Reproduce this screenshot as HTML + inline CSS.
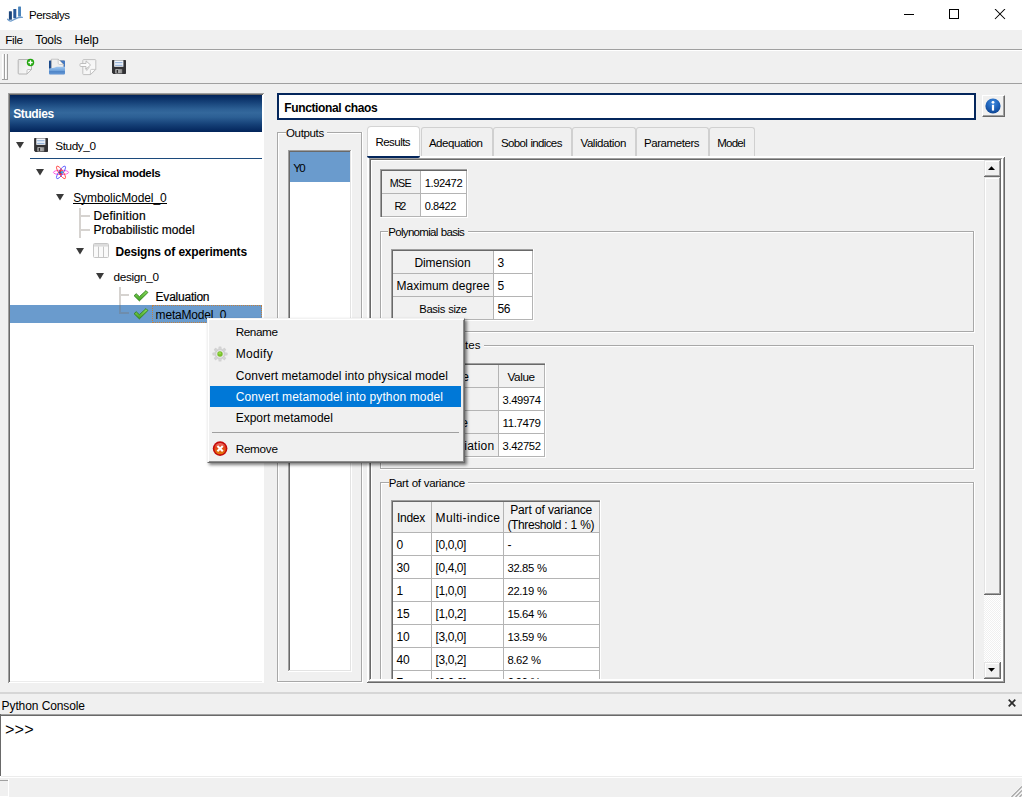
<!DOCTYPE html>
<html>
<head>
<meta charset="utf-8">
<title>Persalys</title>
<style>
*{box-sizing:border-box;margin:0;padding:0}
html,body{width:1022px;height:797px;overflow:hidden;background:#f0f0f0;font-family:"Liberation Sans",sans-serif;font-size:12px;color:#000}
.a{position:absolute}
.t{position:absolute;white-space:nowrap;line-height:14px;height:14px}
</style>
</head>
<body>
<!-- title bar -->
<div class="a" style="left:0px;top:0px;width:1022px;height:30px;background:#ffffff;"></div>
<svg class="a" style="left:6px;top:5px" width="18" height="18" viewBox="0 0 18 18">
<path d="M1.6 14.3 Q3.5 16.4 5.2 16 L10 13.6 Q13 12 16.4 12.3" stroke="#6f9ccc" stroke-width="1.3" fill="none" stroke-linecap="round"/>
<rect x="2.9" y="6.2" width="3" height="8.6" rx="0.5" fill="#1c467c"/>
<rect x="7.3" y="4" width="3" height="9.3" rx="0.5" fill="#28599a"/>
<rect x="12.1" y="1.5" width="2.9" height="10" rx="0.5" fill="#4a84bc"/>
</svg>
<div class="t" style="left:29.00px;top:8px;letter-spacing:-0.440px;font-size:11.5px;line-height:14px;height:14px;">Persalys</div>
<svg class="a" style="left:904px;top:9px" width="12" height="12"><path d="M0 5.5h10" stroke="#000" stroke-width="1"/></svg>
<svg class="a" style="left:949px;top:9px" width="12" height="12"><rect x="0.5" y="0.5" width="9" height="9" fill="none" stroke="#000" stroke-width="1"/></svg>
<svg class="a" style="left:994px;top:9px" width="12" height="12"><path d="M1 0l10 10M11 0l-10 10" stroke="#000" stroke-width="1.05"/></svg>
<!-- menu bar -->
<div class="t" style="left:5.20px;top:33px;letter-spacing:-0.366px;font-size:11.75px;line-height:14px;height:14px;">File</div>
<div class="t" style="left:35.30px;top:33px;letter-spacing:-0.325px;">Tools</div>
<div class="t" style="left:74.60px;top:33px;letter-spacing:-0.233px;">Help</div>
<div class="a" style="left:0px;top:49px;width:1022px;height:1px;background:#a0a0a0;"></div>
<div class="a" style="left:0px;top:50px;width:1022px;height:1px;background:#ffffff;"></div>
<!-- toolbar -->
<div class="a" style="left:2px;top:54px;width:1px;height:25px;background:#ffffff;"></div>
<div class="a" style="left:4px;top:54px;width:1px;height:26px;background:#a0a0a0;"></div>
<div class="a" style="left:2px;top:79px;width:3px;height:1px;background:#a0a0a0;"></div>
<div class="a" style="left:5px;top:54px;width:1px;height:25px;background:#ffffff;"></div>
<div class="a" style="left:7px;top:54px;width:1px;height:26px;background:#a0a0a0;"></div>
<div class="a" style="left:5px;top:79px;width:3px;height:1px;background:#a0a0a0;"></div>
<div class="a" style="left:0px;top:83px;width:1022px;height:1px;background:#a0a0a0;"></div>
<svg class="a" style="left:17px;top:58px" width="18" height="18" viewBox="0 0 18 18">
<defs><linearGradient id="pg" x1="0" y1="0" x2="1" y2="1"><stop offset="0" stop-color="#e4e4e4"/><stop offset="1" stop-color="#fdfdfd"/></linearGradient></defs>
<path d="M2 1.5h9.5l3 0v10l-4.5 4.5h-8a0.8 0.8 0 0 1-0.8-0.8v-12.9a0.8 0.8 0 0 1 0.8-0.8z" fill="url(#pg)" stroke="#b4b4b4" stroke-width="1"/>
<path d="M10 16v-3.5a1 1 0 0 1 1-1h3.5z" fill="#f8f8f8" stroke="#b4b4b4" stroke-width="0.8"/>
<circle cx="13.5" cy="4.5" r="3.7" fill="#22a50f"/>
<path d="M13.5 2.3v4.4M11.3 4.5h4.4" stroke="#fff" stroke-width="1.3"/>
</svg>
<svg class="a" style="left:48px;top:58px" width="18" height="18" viewBox="0 0 18 18">
<defs><linearGradient id="og" x1="0" y1="0" x2="0" y2="1"><stop offset="0" stop-color="#a2c8f0"/><stop offset="0.45" stop-color="#74a6de"/><stop offset="1" stop-color="#5a8ecf"/></linearGradient></defs>
<path d="M1 3.2a0.8 0.8 0 0 1 0.8-0.8h14.4a0.8 0.8 0 0 1 0.8 0.8v11h-16z" fill="#1a4889"/>
<path d="M11 3h6v7.5h-6z" fill="#4378c2"/>
<path d="M3.4 1.2h6.8l5.2 5.2v4.6h-12z" fill="#eeeeee" stroke="#b4b4b4" stroke-width="0.7"/>
<path d="M10.2 1.2l5.2 5.2h-4a1.2 1.2 0 0 1-1.2-1.2z" fill="#fbfbfb" stroke="#b4b4b4" stroke-width="0.6"/>
<path d="M1 10.4l5-0.7l2.8-1h8.2v6.7a1 1 0 0 1-1 1h-14a1 1 0 0 1-1-1z" fill="url(#og)"/>
<path d="M1.2 13.9h15.6" stroke="#3c74bc" stroke-width="0.9"/>
</svg>
<svg class="a" style="left:79px;top:58px" width="18" height="18" viewBox="0 0 18 18">
<defs><linearGradient id="ip" x1="0" y1="0" x2="1" y2="1"><stop offset="0" stop-color="#f0f0f0"/><stop offset="1" stop-color="#fcfcfc"/></linearGradient></defs>
<path d="M4.6 1.6h11.4a0.8 0.8 0 0 1 0.8 0.8v9l-5.2 5.2h-7a0.8 0.8 0 0 1-0.8-0.8v-13.4a0.8 0.8 0 0 1 0.8-0.8z" fill="url(#ip)" stroke="#c2c2c2" stroke-width="1"/>
<path d="M11.4 16.6v-4a1.2 1.2 0 0 1 1.2-1.2h4z" fill="#fdfdfd" stroke="#bdbdbd" stroke-width="0.8"/>
<path d="M6.2 10.2l1.6 2.2l2.6-3.4" fill="none" stroke="#cfcfcf" stroke-width="1.1"/>
<path d="M1.8 5.5h5.2v-2.6l4.6 4.1l-4.6 4.1v-2.6h-5.2a0.8 0.8 0 0 1-0.8-0.8v-1.4a0.8 0.8 0 0 1 0.8-0.8z" fill="#fbfbfb" stroke="#b9b9b9" stroke-width="0.9"/>
</svg>
<svg class="a" style="left:111px;top:59px" width="16" height="16" viewBox="0 0 16 16">
<defs><linearGradient id="fg1" x1="0" y1="0" x2="1" y2="0"><stop offset="0" stop-color="#d6d6d6"/><stop offset="1" stop-color="#8c8c8c"/></linearGradient></defs>
<path d="M1 1.6a0.7 0.7 0 0 1 0.7-0.7h12.6a0.7 0.7 0 0 1 0.7 0.7v12.7a0.7 0.7 0 0 1-0.7 0.7h-12l-1.3-1.2z" fill="#323235"/>
<path d="M3.2 1.3h9.2v6.5h-9.2z" fill="#f3f6fb"/>
<path d="M4.1 3.7h7.4M4.1 6.3h7.4" stroke="#86a8d4" stroke-width="1"/>
<path d="M4.4 10.2h6.8v4.2h-6.8z" fill="url(#fg1)"/>
<path d="M5.5 10.9h1.6v3h-1.6z" fill="#2c2c2e"/>
</svg>
<!-- studies -->
<div class="a" style="left:8px;top:93px;width:256px;height:590px;background:#ffffff;"></div>
<div class="a" style="left:8px;top:93px;width:256px;height:1px;background:#a0a0a0;"></div>
<div class="a" style="left:8px;top:93px;width:1px;height:590px;background:#a0a0a0;"></div>
<div class="a" style="left:9px;top:94px;width:254px;height:1px;background:#696969;"></div>
<div class="a" style="left:9px;top:94px;width:1px;height:588px;background:#696969;"></div>
<div class="a" style="left:10px;top:681px;width:252px;height:1px;background:#ececec;"></div>
<div class="a" style="left:10px;top:95px;width:252px;height:37px;background:linear-gradient(to bottom,#02245a 0%,#143f76 18%,#2c5f94 38%,#34689c 48%,#2c5f94 60%,#143f76 80%,#02245a 100%);"></div>
<div class="t" style="left:13.20px;top:107px;letter-spacing:-0.383px;font-weight:bold;color:#fff;">Studies</div>
<svg class="a" style="left:16px;top:142px" width="8" height="7" viewBox="0 0 8 7"><path d="M0 0H8L4.0 6.5Z" fill="#3a3a3a"/></svg>
<svg class="a" style="left:34px;top:138px" width="14" height="14" viewBox="0.9 0.9 14.1 14.1">
<defs><linearGradient id="fg2" x1="0" y1="0" x2="1" y2="0"><stop offset="0" stop-color="#d6d6d6"/><stop offset="1" stop-color="#8c8c8c"/></linearGradient></defs>
<path d="M1 1.6a0.7 0.7 0 0 1 0.7-0.7h12.6a0.7 0.7 0 0 1 0.7 0.7v12.7a0.7 0.7 0 0 1-0.7 0.7h-12l-1.3-1.2z" fill="#323235"/>
<path d="M3.2 1.3h9.2v6.5h-9.2z" fill="#f3f6fb"/>
<path d="M4.1 3.7h7.4M4.1 6.3h7.4" stroke="#86a8d4" stroke-width="1"/>
<path d="M4.4 10.2h6.8v4.2h-6.8z" fill="url(#fg2)"/>
<path d="M5.5 10.9h1.6v3h-1.6z" fill="#2c2c2e"/>
</svg>
<div class="t" style="left:55.30px;top:139px;letter-spacing:-0.414px;font-size:11.75px;line-height:14px;height:14px;">Study_0</div>
<div class="a" style="left:30px;top:158px;width:232px;height:1px;background:#1c4a7c;"></div>
<svg class="a" style="left:36px;top:169px" width="8" height="7" viewBox="0 0 8 7"><path d="M0 0H8L4.0 6.5Z" fill="#3a3a3a"/></svg>
<svg class="a" style="left:52px;top:164px" width="18" height="17" viewBox="0 0 18 17">
<g fill="none" stroke-width="0.9">
<ellipse cx="9" cy="8.4" rx="7.6" ry="2.2" stroke="#ff48e0"/>
<ellipse cx="9" cy="8.4" rx="7.4" ry="2.2" stroke="#5a5aff" transform="rotate(-56 9 8.4)"/>
<ellipse cx="9" cy="8.4" rx="7.4" ry="2.2" stroke="#ff4848" transform="rotate(56 9 8.4)"/>
</g>
<circle cx="8.6" cy="7.4" r="1.3" fill="#f03818"/><circle cx="8.8" cy="9.6" r="1.3" fill="#e83030"/>
<circle cx="10" cy="8.2" r="1.2" fill="#3aa0e8"/><circle cx="7.8" cy="8.6" r="1.1" fill="#2848c8"/>
</svg>
<div class="t" style="left:75.20px;top:166px;letter-spacing:-0.360px;word-spacing:0.360px;font-weight:bold;font-size:11.5px;line-height:14px;height:14px;">Physical models</div>
<svg class="a" style="left:56px;top:194px" width="8" height="7" viewBox="0 0 8 7"><path d="M0 0H8L4.0 6.5Z" fill="#3a3a3a"/></svg>
<div class="t" style="left:73.20px;top:191px;letter-spacing:-0.086px;">SymbolicModel_0</div>
<div class="a" style="left:73px;top:203px;width:94px;height:1px;background:#000;"></div>
<div class="a" style="left:79px;top:208px;width:2px;height:30px;background:rgba(120,110,100,0.3);"></div>
<div class="a" style="left:81px;top:215px;width:9px;height:2px;background:rgba(120,110,100,0.3);"></div>
<div class="a" style="left:81px;top:229px;width:9px;height:2px;background:rgba(120,110,100,0.3);"></div>
<div class="t" style="left:93.60px;top:209px;letter-spacing:0.222px;-webkit-text-stroke:0.2px #000;">Definition</div>
<div class="t" style="left:93.60px;top:223px;letter-spacing:0.017px;-webkit-text-stroke:0.2px #000;">Probabilistic model</div>
<svg class="a" style="left:76px;top:248px" width="8" height="7" viewBox="0 0 8 7"><path d="M0 0H8L4.0 6.5Z" fill="#3a3a3a"/></svg>
<svg class="a" style="left:93px;top:243px" width="16" height="15" viewBox="0 0 16 15">
<rect x="0.5" y="0.5" width="15" height="14" rx="1" fill="#fafafa" stroke="#c6c6c6"/>
<rect x="1" y="1" width="14" height="2.6" fill="#dcdcdc"/>
<path d="M5.5 3.6v10.9M10.5 3.6v10.9" stroke="#c6c6c6"/>
</svg>
<div class="t" style="left:115.50px;top:245px;letter-spacing:-0.200px;word-spacing:0.200px;font-weight:bold;">Designs of experiments</div>
<svg class="a" style="left:96px;top:273px" width="8" height="7" viewBox="0 0 8 7"><path d="M0 0H8L4.0 6.5Z" fill="#3a3a3a"/></svg>
<div class="t" style="left:113.50px;top:270px;letter-spacing:-0.312px;font-size:11.75px;line-height:14px;height:14px;">design_0</div>
<div class="a" style="left:10px;top:305px;width:252px;height:18px;background:#6a9bcd;"></div>
<div class="a" style="left:119px;top:287px;width:2px;height:27px;background:rgba(120,110,100,0.3);"></div>
<div class="a" style="left:121px;top:294px;width:8px;height:2px;background:rgba(120,110,100,0.3);"></div>
<div class="a" style="left:121px;top:312px;width:8px;height:2px;background:rgba(120,110,100,0.3);"></div>
<div class="a" style="left:152px;top:305px;width:110px;height:18px;border:1px dotted #c08040;"></div>
<svg class="a" style="left:133px;top:290px" width="16" height="12" viewBox="0 0 16 12">
<defs><linearGradient id="ck1" x1="0" y1="0" x2="0" y2="1"><stop offset="0" stop-color="#8ade5c"/><stop offset="1" stop-color="#3f9f22"/></linearGradient></defs>
<path d="M1.1 5.7L3.2 3.7L6.4 6.7L13 0.6L14.9 2.5L6.4 10.9Z" fill="url(#ck1)" stroke="#2f7f1c" stroke-width="0.9" stroke-linejoin="round"/>
</svg>
<svg class="a" style="left:133px;top:308px" width="16" height="12" viewBox="0 0 16 12">
<defs><linearGradient id="ck2" x1="0" y1="0" x2="0" y2="1"><stop offset="0" stop-color="#8ade5c"/><stop offset="1" stop-color="#3f9f22"/></linearGradient></defs>
<path d="M1.1 5.7L3.2 3.7L6.4 6.7L13 0.6L14.9 2.5L6.4 10.9Z" fill="url(#ck2)" stroke="#2f7f1c" stroke-width="0.9" stroke-linejoin="round"/>
</svg>
<div class="t" style="left:155.60px;top:290px;letter-spacing:-0.233px;-webkit-text-stroke:0.2px #000;">Evaluation</div>
<div class="t" style="left:155.60px;top:308px;letter-spacing:-0.180px;">metaModel_0</div>
<!-- right -->
<div class="a" style="left:277px;top:93px;width:699px;height:27px;background:#ffffff;border:2px solid #04265c;"></div>
<div class="t" style="left:284.30px;top:101px;letter-spacing:-0.379px;word-spacing:0.379px;font-weight:bold;">Functional chaos</div>
<div class="a" style="left:982px;top:95px;width:23px;height:22px;background:#f0f0f0;border-top:1px solid #fff;border-left:1px solid #fff;border-right:1px solid #696969;border-bottom:1px solid #696969;"></div>
<div class="a" style="left:1003px;top:96px;width:1px;height:20px;background:#a0a0a0;"></div>
<div class="a" style="left:983px;top:115px;width:21px;height:1px;background:#a0a0a0;"></div>
<svg class="a" style="left:985px;top:98px" width="16" height="16" viewBox="0 0 16 16">
<defs><radialGradient id="ig" cx="0.5" cy="0.3" r="0.75"><stop offset="0" stop-color="#3f8be0"/><stop offset="0.6" stop-color="#1b5db3"/><stop offset="1" stop-color="#0c3f8a"/></radialGradient></defs>
<circle cx="8" cy="8" r="7.6" fill="url(#ig)"/>
<circle cx="8" cy="4.3" r="1.4" fill="#fff"/>
<path d="M6.9 6.8h2.2v5.8h-2.2z" fill="#fff"/>
</svg>
<div class="a" style="left:277px;top:132px;width:9px;height:1px;background:#a8a8a8;"></div>
<div class="a" style="left:327.2px;top:132px;width:34.80000000000001px;height:1px;background:#a8a8a8;"></div>
<div class="a" style="left:278px;top:133px;width:8px;height:1px;background:#ffffff;"></div>
<div class="a" style="left:327.2px;top:133px;width:33.80000000000001px;height:1px;background:#ffffff;"></div>
<div class="a" style="left:277px;top:132px;width:1px;height:550px;background:#a8a8a8;"></div>
<div class="a" style="left:278px;top:133px;width:1px;height:548px;background:#ffffff;"></div>
<div class="a" style="left:361px;top:132px;width:1px;height:550px;background:#a8a8a8;"></div>
<div class="a" style="left:362px;top:132px;width:1px;height:551px;background:#ffffff;"></div>
<div class="a" style="left:277px;top:681px;width:85px;height:1px;background:#a8a8a8;"></div>
<div class="a" style="left:277px;top:682px;width:86px;height:1px;background:#ffffff;"></div>
<div class="t" style="left:286.00px;top:126px;letter-spacing:-0.342px;font-size:11.5px;line-height:14px;height:14px;">Outputs</div>
<div class="a" style="left:288px;top:150px;width:64px;height:522px;background:#ffffff;"></div>
<div class="a" style="left:288px;top:150px;width:64px;height:1px;background:#a0a0a0;"></div>
<div class="a" style="left:288px;top:150px;width:1px;height:522px;background:#a0a0a0;"></div>
<div class="a" style="left:289px;top:151px;width:62px;height:1px;background:#696969;"></div>
<div class="a" style="left:289px;top:151px;width:1px;height:520px;background:#696969;"></div>
<div class="a" style="left:289px;top:670px;width:62px;height:1px;background:#e3e3e3;"></div>
<div class="a" style="left:350px;top:151px;width:1px;height:520px;background:#e3e3e3;"></div>
<div class="a" style="left:288px;top:671px;width:64px;height:1px;background:#ffffff;"></div>
<div class="a" style="left:351px;top:150px;width:1px;height:522px;background:#ffffff;"></div>
<div class="a" style="left:290px;top:152px;width:60px;height:30px;background:#6a9bcd;"></div>
<div class="t" style="left:293.30px;top:161px;letter-spacing:-1.787px;font-size:11.5px;line-height:14px;height:14px;">Y0</div>
<div class="a" style="left:421px;top:127px;width:72px;height:30px;background:#f0f0f0;border:1px solid #d0d0d0;border-bottom:none;border-radius:3px 3px 0 0;"></div>
<div class="t" style="left:428.90px;top:136px;letter-spacing:-0.452px;font-size:11.5px;line-height:14px;height:14px;">Adequation</div>
<div class="a" style="left:493px;top:127px;width:79px;height:30px;background:#f0f0f0;border:1px solid #d0d0d0;border-bottom:none;border-radius:3px 3px 0 0;"></div>
<div class="t" style="left:501.00px;top:136px;letter-spacing:-0.639px;word-spacing:0.639px;font-size:11.5px;line-height:14px;height:14px;">Sobol indices</div>
<div class="a" style="left:572px;top:127px;width:64px;height:30px;background:#f0f0f0;border:1px solid #d0d0d0;border-bottom:none;border-radius:3px 3px 0 0;"></div>
<div class="t" style="left:580.50px;top:136px;letter-spacing:-0.427px;font-size:11.5px;line-height:14px;height:14px;">Validation</div>
<div class="a" style="left:636px;top:127px;width:73px;height:30px;background:#f0f0f0;border:1px solid #d0d0d0;border-bottom:none;border-radius:3px 3px 0 0;"></div>
<div class="t" style="left:644.00px;top:136px;letter-spacing:-0.435px;font-size:11.5px;line-height:14px;height:14px;">Parameters</div>
<div class="a" style="left:709px;top:127px;width:46px;height:30px;background:#f0f0f0;border:1px solid #d0d0d0;border-bottom:none;border-radius:3px 3px 0 0;"></div>
<div class="t" style="left:717.20px;top:136px;letter-spacing:-0.734px;font-size:11.5px;line-height:14px;height:14px;">Model</div>
<div class="a" style="left:367px;top:156px;width:638px;height:1px;background:#ffffff;"></div>
<div class="a" style="left:367px;top:157px;width:637px;height:1px;background:#ffffff;"></div>
<div class="a" style="left:367px;top:156px;width:1px;height:527px;background:#ffffff;"></div>
<div class="a" style="left:368px;top:156px;width:1px;height:526px;background:#ffffff;"></div>
<div class="a" style="left:367px;top:682px;width:638px;height:1px;background:#696969;"></div>
<div class="a" style="left:368px;top:681px;width:636px;height:1px;background:#a0a0a0;"></div>
<div class="a" style="left:1004px;top:157px;width:1px;height:526px;background:#696969;"></div>
<div class="a" style="left:1003px;top:158px;width:1px;height:524px;background:#a0a0a0;"></div>
<div class="a" style="left:369px;top:158px;width:633px;height:1px;background:#a0a0a0;"></div>
<div class="a" style="left:370px;top:159px;width:631px;height:1px;background:#696969;"></div>
<div class="a" style="left:369px;top:158px;width:1px;height:522px;background:#a0a0a0;"></div>
<div class="a" style="left:370px;top:159px;width:1px;height:520px;background:#696969;"></div>
<div class="a" style="left:371px;top:160px;width:613px;height:1px;background:#ffffff;"></div>
<div class="a" style="left:371px;top:160px;width:1px;height:519px;background:#ffffff;"></div>
<div class="a" style="left:370px;top:680px;width:633px;height:1px;background:#ffffff;"></div>
<div class="a" style="left:371px;top:679px;width:631px;height:1px;background:#ffffff;"></div>
<div class="a" style="left:1002px;top:159px;width:1px;height:522px;background:#ffffff;"></div>
<div class="a" style="left:1001px;top:160px;width:1px;height:520px;background:#ffffff;"></div>
<div class="a" style="left:367px;top:126px;width:53px;height:30px;background:#ffffff;border:1px solid #d4d4d4;border-bottom:none;border-radius:4px 4px 0 0;"></div>
<div class="a" style="left:367px;top:156px;width:53px;height:2px;background:#04265c;border-radius:0 0 2px 2px;"></div>
<div class="t" style="left:375.50px;top:135px;letter-spacing:-0.539px;font-size:11.5px;line-height:14px;height:14px;">Results</div>
<div class="a" style="left:0;top:0;width:984px;height:679px;overflow:hidden">
<div class="a" style="left:382px;top:171px;width:85px;height:46px;background:#ffffff;"></div>
<div class="a" style="left:382px;top:171px;width:38px;height:22px;background:#f1f1f1;"></div>
<div class="a" style="left:382px;top:194px;width:38px;height:22px;background:#f1f1f1;"></div>
<div class="a" style="left:382px;top:193px;width:85px;height:1px;background:#b4b4b4;"></div>
<div class="a" style="left:382px;top:216px;width:85px;height:1px;background:#b4b4b4;"></div>
<div class="a" style="left:420px;top:171px;width:1px;height:46px;background:#b4b4b4;"></div>
<div class="a" style="left:466px;top:171px;width:1px;height:46px;background:#b4b4b4;"></div>
<div class="a" style="left:380px;top:169px;width:88px;height:1px;background:#a0a0a0;"></div>
<div class="a" style="left:380px;top:169px;width:1px;height:49px;background:#a0a0a0;"></div>
<div class="a" style="left:381px;top:170px;width:86px;height:1px;background:#696969;"></div>
<div class="a" style="left:381px;top:170px;width:1px;height:48px;background:#696969;"></div>
<div class="a" style="left:380px;top:217px;width:88px;height:1px;background:#ffffff;"></div>
<div class="a" style="left:467px;top:169px;width:1px;height:49px;background:#ffffff;"></div>
<div class="t" style="left:389.80px;top:176px;letter-spacing:-0.696px;font-size:10.75px;line-height:14px;height:14px;">MSE</div>
<div class="t" style="left:424.70px;top:176px;letter-spacing:-0.448px;font-size:11.25px;line-height:14px;height:14px;">1.92472</div>
<div class="t" style="left:394.50px;top:199px;letter-spacing:-1.906px;font-size:10.75px;line-height:14px;height:14px;">R2</div>
<div class="t" style="left:424.70px;top:199px;letter-spacing:-0.388px;font-size:11.0px;line-height:14px;height:14px;">0.8422</div>
<div class="a" style="left:380px;top:231px;width:8px;height:1px;background:#a8a8a8;"></div>
<div class="a" style="left:467.8px;top:231px;width:506.2px;height:1px;background:#a8a8a8;"></div>
<div class="a" style="left:381px;top:232px;width:7px;height:1px;background:#ffffff;"></div>
<div class="a" style="left:467.8px;top:232px;width:505.2px;height:1px;background:#ffffff;"></div>
<div class="a" style="left:380px;top:231px;width:1px;height:101px;background:#a8a8a8;"></div>
<div class="a" style="left:381px;top:232px;width:1px;height:99px;background:#ffffff;"></div>
<div class="a" style="left:973px;top:231px;width:1px;height:101px;background:#a8a8a8;"></div>
<div class="a" style="left:974px;top:231px;width:1px;height:102px;background:#ffffff;"></div>
<div class="a" style="left:380px;top:331px;width:594px;height:1px;background:#a8a8a8;"></div>
<div class="a" style="left:380px;top:332px;width:595px;height:1px;background:#ffffff;"></div>
<div class="t" style="left:388.30px;top:225px;letter-spacing:-0.696px;word-spacing:0.696px;font-size:11.5px;line-height:14px;height:14px;">Polynomial basis</div>
<div class="a" style="left:393px;top:251px;width:140px;height:69px;background:#ffffff;"></div>
<div class="a" style="left:393px;top:251px;width:100px;height:22px;background:#f1f1f1;"></div>
<div class="a" style="left:393px;top:274px;width:100px;height:22px;background:#f1f1f1;"></div>
<div class="a" style="left:393px;top:297px;width:100px;height:22px;background:#f1f1f1;"></div>
<div class="a" style="left:393px;top:273px;width:140px;height:1px;background:#b4b4b4;"></div>
<div class="a" style="left:393px;top:296px;width:140px;height:1px;background:#b4b4b4;"></div>
<div class="a" style="left:393px;top:319px;width:140px;height:1px;background:#b4b4b4;"></div>
<div class="a" style="left:493px;top:251px;width:1px;height:69px;background:#b4b4b4;"></div>
<div class="a" style="left:532px;top:251px;width:1px;height:69px;background:#b4b4b4;"></div>
<div class="a" style="left:391px;top:249px;width:143px;height:1px;background:#a0a0a0;"></div>
<div class="a" style="left:391px;top:249px;width:1px;height:72px;background:#a0a0a0;"></div>
<div class="a" style="left:392px;top:250px;width:141px;height:1px;background:#696969;"></div>
<div class="a" style="left:392px;top:250px;width:1px;height:71px;background:#696969;"></div>
<div class="a" style="left:391px;top:320px;width:143px;height:1px;background:#ffffff;"></div>
<div class="a" style="left:533px;top:249px;width:1px;height:72px;background:#ffffff;"></div>
<div class="t" style="left:414.40px;top:256px;letter-spacing:-0.062px;">Dimension</div>
<div class="t" style="left:497.50px;top:256px;">3</div>
<div class="t" style="left:396.40px;top:279px;letter-spacing:0.038px;">Maximum degree</div>
<div class="t" style="left:497.50px;top:279px;">5</div>
<div class="t" style="left:419.30px;top:302px;letter-spacing:-0.353px;word-spacing:0.353px;font-size:11.25px;line-height:14px;height:14px;">Basis size</div>
<div class="t" style="left:497.50px;top:302px;letter-spacing:-0.300px;">56</div>
<div class="a" style="left:380px;top:345px;width:6px;height:1px;background:#a8a8a8;"></div>
<div class="a" style="left:484px;top:345px;width:490px;height:1px;background:#a8a8a8;"></div>
<div class="a" style="left:381px;top:346px;width:5px;height:1px;background:#ffffff;"></div>
<div class="a" style="left:484px;top:346px;width:489px;height:1px;background:#ffffff;"></div>
<div class="a" style="left:380px;top:345px;width:1px;height:124px;background:#a8a8a8;"></div>
<div class="a" style="left:381px;top:346px;width:1px;height:122px;background:#ffffff;"></div>
<div class="a" style="left:973px;top:345px;width:1px;height:124px;background:#a8a8a8;"></div>
<div class="a" style="left:974px;top:345px;width:1px;height:125px;background:#ffffff;"></div>
<div class="a" style="left:380px;top:468px;width:594px;height:1px;background:#a8a8a8;"></div>
<div class="a" style="left:380px;top:469px;width:595px;height:1px;background:#ffffff;"></div>
<div class="t" style="left:380.00px;top:338px;letter-spacing:0.052px;font-size:11.5px;line-height:14px;height:14px;">Moments estimates</div>
<div class="a" style="left:393px;top:365px;width:152px;height:92px;background:#ffffff;"></div>
<div class="a" style="left:393px;top:365px;width:105px;height:22px;background:#f1f1f1;"></div>
<div class="a" style="left:499px;top:365px;width:45px;height:22px;background:#f1f1f1;"></div>
<div class="a" style="left:393px;top:388px;width:105px;height:22px;background:#f1f1f1;"></div>
<div class="a" style="left:393px;top:411px;width:105px;height:22px;background:#f1f1f1;"></div>
<div class="a" style="left:393px;top:434px;width:105px;height:22px;background:#f1f1f1;"></div>
<div class="a" style="left:393px;top:387px;width:152px;height:1px;background:#b4b4b4;"></div>
<div class="a" style="left:393px;top:410px;width:152px;height:1px;background:#b4b4b4;"></div>
<div class="a" style="left:393px;top:433px;width:152px;height:1px;background:#b4b4b4;"></div>
<div class="a" style="left:393px;top:456px;width:152px;height:1px;background:#b4b4b4;"></div>
<div class="a" style="left:498px;top:365px;width:1px;height:92px;background:#b4b4b4;"></div>
<div class="a" style="left:544px;top:365px;width:1px;height:92px;background:#b4b4b4;"></div>
<div class="a" style="left:391px;top:363px;width:155px;height:1px;background:#a0a0a0;"></div>
<div class="a" style="left:391px;top:363px;width:1px;height:95px;background:#a0a0a0;"></div>
<div class="a" style="left:392px;top:364px;width:153px;height:1px;background:#696969;"></div>
<div class="a" style="left:392px;top:364px;width:1px;height:94px;background:#696969;"></div>
<div class="a" style="left:391px;top:457px;width:155px;height:1px;background:#ffffff;"></div>
<div class="a" style="left:545px;top:363px;width:1px;height:95px;background:#ffffff;"></div>
<div class="t" style="left:423.00px;top:370px;letter-spacing:-0.100px;">Estimate</div>
<div class="t" style="left:507.40px;top:370px;letter-spacing:-0.370px;font-size:11.75px;line-height:14px;height:14px;">Value</div>
<div class="t" style="left:431.00px;top:393px;">Mean</div>
<div class="t" style="left:502.60px;top:393px;letter-spacing:-0.381px;font-size:11.25px;line-height:14px;height:14px;">3.49974</div>
<div class="t" style="left:424.00px;top:416px;letter-spacing:-0.357px;">Variance</div>
<div class="t" style="left:502.60px;top:416px;letter-spacing:-0.388px;font-size:11.5px;line-height:14px;height:14px;">11.7479</div>
<div class="t" style="left:390.00px;top:439px;letter-spacing:0.241px;">Standard deviation</div>
<div class="t" style="left:502.60px;top:439px;letter-spacing:-0.381px;font-size:11.25px;line-height:14px;height:14px;">3.42752</div>
<div class="a" style="left:380px;top:482px;width:9px;height:1px;background:#a8a8a8;"></div>
<div class="a" style="left:468px;top:482px;width:506px;height:1px;background:#a8a8a8;"></div>
<div class="a" style="left:381px;top:483px;width:8px;height:1px;background:#ffffff;"></div>
<div class="a" style="left:468px;top:483px;width:505px;height:1px;background:#ffffff;"></div>
<div class="a" style="left:380px;top:482px;width:1px;height:219px;background:#a8a8a8;"></div>
<div class="a" style="left:381px;top:483px;width:1px;height:217px;background:#ffffff;"></div>
<div class="a" style="left:973px;top:482px;width:1px;height:219px;background:#a8a8a8;"></div>
<div class="a" style="left:974px;top:482px;width:1px;height:220px;background:#ffffff;"></div>
<div class="a" style="left:380px;top:700px;width:594px;height:1px;background:#a8a8a8;"></div>
<div class="a" style="left:380px;top:701px;width:595px;height:1px;background:#ffffff;"></div>
<div class="t" style="left:388.70px;top:476px;letter-spacing:-0.323px;word-spacing:0.323px;font-size:11.5px;line-height:14px;height:14px;">Part of variance</div>
<div class="a" style="left:393px;top:502px;width:207px;height:177px;background:#ffffff;"></div>
<div class="a" style="left:393px;top:502px;width:38px;height:30px;background:#f1f1f1;"></div>
<div class="a" style="left:432px;top:502px;width:71px;height:30px;background:#f1f1f1;"></div>
<div class="a" style="left:504px;top:502px;width:95px;height:30px;background:#f1f1f1;"></div>
<div class="a" style="left:393px;top:532px;width:207px;height:1px;background:#b4b4b4;"></div>
<div class="a" style="left:393px;top:555px;width:207px;height:1px;background:#b4b4b4;"></div>
<div class="a" style="left:393px;top:578px;width:207px;height:1px;background:#b4b4b4;"></div>
<div class="a" style="left:393px;top:601px;width:207px;height:1px;background:#b4b4b4;"></div>
<div class="a" style="left:393px;top:624px;width:207px;height:1px;background:#b4b4b4;"></div>
<div class="a" style="left:393px;top:647px;width:207px;height:1px;background:#b4b4b4;"></div>
<div class="a" style="left:393px;top:670px;width:207px;height:1px;background:#b4b4b4;"></div>
<div class="a" style="left:431px;top:502px;width:1px;height:177px;background:#b4b4b4;"></div>
<div class="a" style="left:503px;top:502px;width:1px;height:177px;background:#b4b4b4;"></div>
<div class="a" style="left:599px;top:502px;width:1px;height:177px;background:#b4b4b4;"></div>
<div class="a" style="left:391px;top:500px;width:210px;height:1px;background:#a0a0a0;"></div>
<div class="a" style="left:391px;top:500px;width:1px;height:179px;background:#a0a0a0;"></div>
<div class="a" style="left:392px;top:501px;width:208px;height:1px;background:#696969;"></div>
<div class="a" style="left:392px;top:501px;width:1px;height:178px;background:#696969;"></div>
<div class="a" style="left:600px;top:500px;width:1px;height:179px;background:#ffffff;"></div>
<div class="t" style="left:397.00px;top:511px;letter-spacing:-0.275px;">Index</div>
<div class="t" style="left:435.60px;top:511px;letter-spacing:0.327px;">Multi-indice</div>
<div class="t" style="left:510.20px;top:503px;letter-spacing:-0.154px;word-spacing:0.154px;">Part of variance</div>
<div class="t" style="left:507.50px;top:518px;letter-spacing:-0.392px;word-spacing:0.392px;">(Threshold : 1 %)</div>
<div class="t" style="left:396.40px;top:538px;">0</div>
<div class="t" style="left:435.60px;top:538px;letter-spacing:-0.417px;">[0,0,0]</div>
<div class="t" style="left:507.50px;top:538px;">-</div>
<div class="t" style="left:396.40px;top:561px;">30</div>
<div class="t" style="left:435.60px;top:561px;letter-spacing:-0.417px;">[0,4,0]</div>
<div class="t" style="left:507.50px;top:561px;letter-spacing:-0.370px;word-spacing:0.370px;font-size:11.25px;line-height:14px;height:14px;">32.85 %</div>
<div class="t" style="left:396.40px;top:584px;">1</div>
<div class="t" style="left:435.60px;top:584px;letter-spacing:-0.417px;">[1,0,0]</div>
<div class="t" style="left:507.50px;top:584px;letter-spacing:-0.370px;word-spacing:0.370px;font-size:11.25px;line-height:14px;height:14px;">22.19 %</div>
<div class="t" style="left:396.40px;top:607px;">15</div>
<div class="t" style="left:435.60px;top:607px;letter-spacing:-0.417px;">[1,0,2]</div>
<div class="t" style="left:507.50px;top:607px;letter-spacing:-0.370px;word-spacing:0.370px;font-size:11.25px;line-height:14px;height:14px;">15.64 %</div>
<div class="t" style="left:396.40px;top:630px;">10</div>
<div class="t" style="left:435.60px;top:630px;letter-spacing:-0.417px;">[3,0,0]</div>
<div class="t" style="left:507.50px;top:630px;letter-spacing:-0.370px;word-spacing:0.370px;font-size:11.25px;line-height:14px;height:14px;">13.59 %</div>
<div class="t" style="left:396.40px;top:653px;">40</div>
<div class="t" style="left:435.60px;top:653px;letter-spacing:-0.417px;">[3,0,2]</div>
<div class="t" style="left:507.50px;top:653px;letter-spacing:-0.391px;word-spacing:0.391px;font-size:11.25px;line-height:14px;height:14px;">8.62 %</div>
<div class="t" style="left:396.40px;top:676px;">7</div>
<div class="t" style="left:435.60px;top:676px;letter-spacing:-0.417px;">[0,0,2]</div>
<div class="t" style="left:507.50px;top:676px;letter-spacing:-0.975px;word-spacing:0.975px;">2.96 %</div>
</div>
<!-- scrollbar -->
<div class="a" style="left:984px;top:160px;width:17px;height:519px;background-color:#f0f0f0;background-image:linear-gradient(45deg,#fff 25%,transparent 25%,transparent 75%,#fff 75%),linear-gradient(45deg,#fff 25%,transparent 25%,transparent 75%,#fff 75%);background-size:2px 2px;background-position:0 0,1px 1px;"></div>
<div class="a" style="left:984px;top:160px;width:17px;height:17px;background:#f0f0f0;"></div>
<div class="a" style="left:984px;top:160px;width:17px;height:1px;background:#e3e3e3;"></div>
<div class="a" style="left:984px;top:160px;width:1px;height:17px;background:#e3e3e3;"></div>
<div class="a" style="left:985px;top:161px;width:15px;height:1px;background:#ffffff;"></div>
<div class="a" style="left:985px;top:161px;width:1px;height:15px;background:#ffffff;"></div>
<div class="a" style="left:985px;top:175px;width:15px;height:1px;background:#a0a0a0;"></div>
<div class="a" style="left:999px;top:161px;width:1px;height:15px;background:#a0a0a0;"></div>
<div class="a" style="left:984px;top:176px;width:17px;height:1px;background:#696969;"></div>
<div class="a" style="left:1000px;top:160px;width:1px;height:17px;background:#696969;"></div>
<div class="a" style="left:984px;top:177px;width:17px;height:418px;background:#f0f0f0;"></div>
<div class="a" style="left:984px;top:177px;width:17px;height:1px;background:#e3e3e3;"></div>
<div class="a" style="left:984px;top:177px;width:1px;height:418px;background:#e3e3e3;"></div>
<div class="a" style="left:985px;top:178px;width:15px;height:1px;background:#ffffff;"></div>
<div class="a" style="left:985px;top:178px;width:1px;height:416px;background:#ffffff;"></div>
<div class="a" style="left:985px;top:593px;width:15px;height:1px;background:#a0a0a0;"></div>
<div class="a" style="left:999px;top:178px;width:1px;height:416px;background:#a0a0a0;"></div>
<div class="a" style="left:984px;top:594px;width:17px;height:1px;background:#696969;"></div>
<div class="a" style="left:1000px;top:177px;width:1px;height:418px;background:#696969;"></div>
<div class="a" style="left:984px;top:662px;width:17px;height:17px;background:#f0f0f0;"></div>
<div class="a" style="left:984px;top:662px;width:17px;height:1px;background:#e3e3e3;"></div>
<div class="a" style="left:984px;top:662px;width:1px;height:17px;background:#e3e3e3;"></div>
<div class="a" style="left:985px;top:663px;width:15px;height:1px;background:#ffffff;"></div>
<div class="a" style="left:985px;top:663px;width:1px;height:15px;background:#ffffff;"></div>
<div class="a" style="left:985px;top:677px;width:15px;height:1px;background:#a0a0a0;"></div>
<div class="a" style="left:999px;top:663px;width:1px;height:15px;background:#a0a0a0;"></div>
<div class="a" style="left:984px;top:678px;width:17px;height:1px;background:#696969;"></div>
<div class="a" style="left:1000px;top:662px;width:1px;height:17px;background:#696969;"></div>
<svg class="a" style="left:988px;top:166px" width="7" height="4" viewBox="0 0 7 4"><path d="M0 4h7L3.5 0.2z" fill="#000"/></svg>
<svg class="a" style="left:988px;top:668px" width="7" height="4" viewBox="0 0 7 4"><path d="M0 0h7L3.5 3.8z" fill="#000"/></svg>
<!-- console -->
<div class="a" style="left:0px;top:692px;width:1022px;height:2px;background:#d6d6d6;"></div>
<div class="t" style="left:1.60px;top:699px;letter-spacing:-0.108px;word-spacing:0.108px;">Python Console</div>
<svg class="a" style="left:1008px;top:699px" width="8" height="8" viewBox="0 0 8 8"><path d="M0.7 0.7l6.6 6.6M7.3 0.7l-6.6 6.6" stroke="#2c2c2c" stroke-width="1.7"/></svg>
<div class="a" style="left:0px;top:714px;width:1022px;height:64px;background:#ffffff;"></div>
<div class="a" style="left:0px;top:714px;width:1022px;height:1px;background:#a0a0a0;"></div>
<div class="a" style="left:0px;top:715px;width:1022px;height:1px;background:#696969;"></div>
<div class="a" style="left:0px;top:714px;width:1px;height:62px;background:#696969;"></div>
<div class="a" style="left:1px;top:776px;width:1021px;height:1px;background:#ececec;"></div>
<div class="t" style="left:5px;top:721px;font-family:'Liberation Mono',monospace;font-size:16px;line-height:20px;height:20px">&gt;&gt;&gt;</div>
<div class="a" style="left:0px;top:780px;width:8px;height:1px;background:#a0a0a0;"></div>
<div class="a" style="left:8px;top:779px;width:1px;height:18px;background:#ffffff;"></div>
<div class="a" style="left:0px;top:796px;width:9px;height:1px;background:#ffffff;"></div>
<svg class="a" style="left:1009px;top:784px" width="13" height="13" viewBox="0 0 13 13">
<path d="M13 1.5l-11.5 11.5M13 5.5l-7.5 7.5M13 9.5l-3.5 3.5" stroke="#fff" stroke-width="1"/>
<path d="M13 2.5l-10.5 10.5M13 6.5l-6.5 6.5M13 10.5l-2.5 2.5" stroke="#a0a0a0" stroke-width="1.2"/>
</svg>
<!-- menu -->
<div class="a" style="left:207px;top:318px;width:258px;height:145px;background:#f0f0f0;border-top:1px solid #f2f2f2;border-left:1px solid #f2f2f2;border-right:1px solid #696969;border-bottom:1px solid #696969;box-shadow:2px 2px 3px rgba(0,0,0,0.5);"></div>
<div class="a" style="left:208px;top:319px;width:1px;height:142px;background:#ffffff;"></div>
<div class="a" style="left:208px;top:319px;width:255px;height:1px;background:#ffffff;"></div>
<div class="a" style="left:463px;top:320px;width:1px;height:142px;background:#8c8c8c;"></div>
<div class="a" style="left:209px;top:461px;width:255px;height:1px;background:#8c8c8c;"></div>
<div class="a" style="left:210px;top:386px;width:251px;height:21px;background:#0078d7;"></div>
<div class="t" style="left:235.70px;top:325px;letter-spacing:-0.431px;font-size:11.75px;line-height:14px;height:14px;">Rename</div>
<div class="t" style="left:235.70px;top:347px;letter-spacing:0.320px;">Modify</div>
<div class="t" style="left:235.70px;top:369px;letter-spacing:0.061px;">Convert metamodel into physical model</div>
<div class="t" style="left:235.70px;top:390px;letter-spacing:0.132px;color:#fff;">Convert metamodel into python model</div>
<div class="t" style="left:235.70px;top:411px;letter-spacing:-0.014px;word-spacing:0.014px;">Export metamodel</div>
<div class="a" style="left:212px;top:432px;width:247px;height:1px;background:#a0a0a0;"></div>
<div class="t" style="left:235.70px;top:442px;letter-spacing:-0.294px;font-size:11.75px;line-height:14px;height:14px;">Remove</div>
<svg class="a" style="left:212px;top:346px" width="16" height="16" viewBox="0 0 16 16">
<g fill="#d2d2d2">
<rect x="6.5" y="0.4" width="3" height="3.4" rx="0.7"/><rect x="6.5" y="12.2" width="3" height="3.4" rx="0.7"/>
<rect x="0.4" y="6.5" width="3.4" height="3" rx="0.7"/><rect x="12.2" y="6.5" width="3.4" height="3" rx="0.7"/>
<g transform="rotate(45 8 8)"><rect x="6.5" y="0.4" width="3" height="3.4" rx="0.7"/><rect x="6.5" y="12.2" width="3" height="3.4" rx="0.7"/>
<rect x="0.4" y="6.5" width="3.4" height="3" rx="0.7"/><rect x="12.2" y="6.5" width="3.4" height="3" rx="0.7"/></g>
</g>
<circle cx="8" cy="8" r="5.7" fill="#d6d6d6"/>
<circle cx="8" cy="8" r="4.4" fill="#e6e6e6" stroke="#c2c2c2" stroke-width="0.6"/>
<circle cx="8" cy="8" r="2.7" fill="#78c02a"/>
<circle cx="7.7" cy="7.2" r="1.3" fill="#98d848"/>
</svg>
<svg class="a" style="left:212px;top:441px" width="16" height="16" viewBox="0 0 16 16">
<defs><linearGradient id="rg" x1="0" y1="0" x2="0" y2="1"><stop offset="0" stop-color="#ee7a7a"/><stop offset="0.35" stop-color="#e2401c"/><stop offset="1" stop-color="#e27c08"/></linearGradient></defs>
<circle cx="8.1" cy="7.6" r="7.3" fill="#c40a0a"/>
<circle cx="8.1" cy="7.6" r="5.7" fill="url(#rg)"/>
<path d="M5.4 4.9l5.4 5.4M10.8 4.9l-5.4 5.4" stroke="#fff" stroke-width="2.1" stroke-linecap="butt"/>
</svg>
</body>
</html>
